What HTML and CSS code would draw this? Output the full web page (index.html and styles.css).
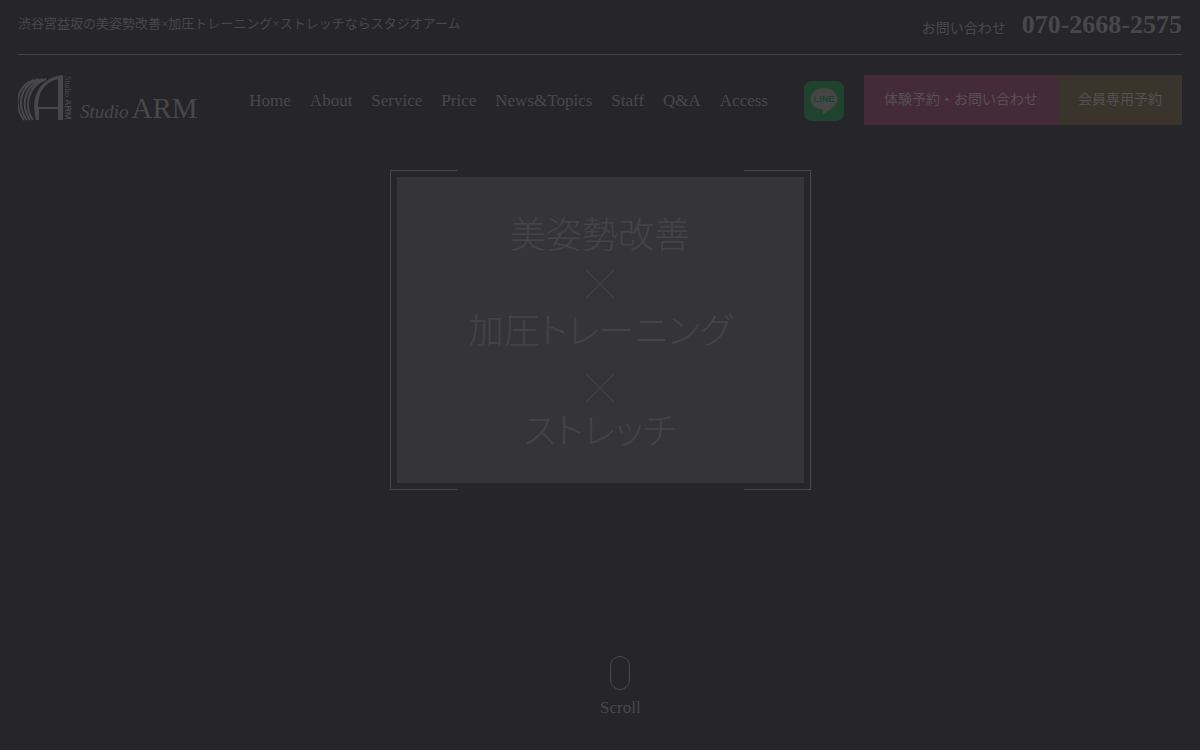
FILE: index.html
```html
<!DOCTYPE html>
<html lang="ja">
<head>
    <meta charset="UTF-8">
    <meta name="viewport" content="width=device-width, initial-scale=1.0">
    <title>Studio ARM</title>
    <link rel="stylesheet" href="styles.css">
</head>
<body>
    <header class="header">
        <div class="header-top">
            <p class="catch">渋谷宮益坂の美姿勢改善×加圧トレーニング×ストレッチならスタジオアーム</p>
            <p class="contact">お問い合わせ <a class="tel" href="tel:07026682575">070-2668-2575</a></p>
        </div>
        <div class="header-main">
            <a class="logo" href="#">
                <svg class="logo-mark" width="54" height="46" viewBox="0 0 54 46" aria-hidden="true">
                    <g fill="none" stroke="currentColor" stroke-width="2">
                        <path d="M16 5C-4 12-3 34 6 45"/>
                        <path d="M21 4C-1 12 0 34 9 45"/>
                        <path d="M25 4C3 12 4 34 12 45"/>
                        <path d="M28 4C7 12 7 34 15 45"/>
                    </g>
                    <path fill="currentColor" fill-rule="evenodd" d="M45 0V45H40V34H21V45H18C12 22 21 3 45 0ZM40 4C27 7 20 17 20 32H40Z"/>
                    <text class="mark-small" transform="translate(47 1) rotate(90)">Studio</text>
                    <text class="mark-name" transform="translate(47 24) rotate(90)">ARM</text>
                </svg>
                <span class="logo-text"><i>Studio</i> <b>ARM</b></span>
            </a>
            <nav class="nav">
                <a href="#">Home</a>
                <a href="#">About</a>
                <a href="#">Service</a>
                <a href="#">Price</a>
                <a href="#">News&amp;Topics</a>
                <a href="#">Staff</a>
                <a href="#">Q&amp;A</a>
                <a href="#">Access</a>
            </nav>
            <a class="line" href="#" aria-label="LINE">
                <svg width="40" height="40" viewBox="0 0 40 40">
                    <rect class="line-bg" width="40" height="40" rx="8"/>
                    <path class="line-balloon" d="M20 7C12.500 7 6.500 12 6.500 18C6.500 23.500 11 27.500 18 28.500C19.500 29 19 30.500 18.700 33C25 30 33.500 24.500 33.500 18C33.500 12 27.500 7 20 7Z"/>
                    <text class="line-name" x="20" y="21" text-anchor="middle">LINE</text>
                </svg>
            </a>
            <div class="buttons">
                <a class="btn btn-trial" href="#">体験予約・お問い合わせ</a>
                <a class="btn btn-member" href="#">会員専用予約</a>
            </div>
        </div>
    </header>
    <main class="hero">
        <div class="frame">
            <h1 class="copy">
                <span>美姿勢改善</span>
                <svg class="cross" viewBox="0 0 30 30" role="img" aria-label="×"><path d="M1 1L29 29M29 1L1 29"/></svg>
                <span>加圧トレーニング</span>
                <svg class="cross cross-low" viewBox="0 0 30 30" role="img" aria-label="×"><path d="M1 1L29 29M29 1L1 29"/></svg>
                <span>ストレッチ</span>
            </h1>
        </div>
    </main>
    <a class="scroll" href="#">
        <span class="mouse"></span>
        Scroll
    </a>
</body>
</html>
```
FILE: styles.css
```css
* {
    margin: 0;
    padding: 0;
    box-sizing: border-box;
}
body {
    display: flex;
    flex-direction: column;
    min-height: 100vh;
    background-color: #26252a;
    color: #48484a;
    font-family: "Liberation Serif", "Noto Sans CJK JP", serif;
}
a {
    color: inherit;
    text-decoration: none;
}
.header {
    padding: 0 18px;
}
.header-top {
    display: flex;
    justify-content: space-between;
    height: 55px;
    border-bottom: 1px solid #444446;
}
.catch {
    padding-top: 14px;
    font-size: 13px;
    line-height: 20px;
}
.contact {
    display: flex;
    align-items: baseline;
    gap: 16px;
    padding-top: 8px;
    font-size: 14px;
    line-height: 34px;
}
.tel {
    font-size: 26px;
    font-weight: bold;
}
.header-main {
    display: flex;
    align-items: center;
    padding-top: 20px;
}
.logo {
    display: flex;
    align-items: flex-end;
    gap: 8px;
    padding-bottom: 4px;
}
.logo-mark {
    display: block;
}
.mark-small {
    font-size: 8px;
    fill: currentColor;
}
.mark-name {
    font-family: "Liberation Sans", sans-serif;
    font-size: 9px;
    font-weight: bold;
    fill: currentColor;
}
.logo-text {
    display: flex;
    align-items: baseline;
    gap: 3px;
    line-height: 18px;
}
.logo-text i {
    font-size: 19px;
}
.logo-text b {
    font-size: 29px;
    font-weight: normal;
}
.nav {
    display: flex;
    gap: 19px;
    margin-left: auto;
    padding-top: 2px;
    font-size: 17px;
    line-height: 24px;
}
.line {
    margin: 2px 20px 0 36px;
}
.line svg {
    display: block;
}
.line-bg {
    fill: #204330;
}
.line-balloon {
    fill: #464647;
}
.line-name {
    font-family: "Liberation Sans", sans-serif;
    font-size: 9px;
    font-weight: bold;
    fill: #204330;
}
.buttons {
    display: flex;
}
.btn {
    padding: 0 20px;
    font-size: 14px;
    line-height: 50px;
    color: #555052;
}
.btn-trial {
    background-color: #452b39;
}
.btn-member {
    background-color: #3a342d;
}
.hero {
    display: flex;
    justify-content: center;
    padding: 45px 18px;
}
/* side lines run the full height, top and bottom lines only at the corners */
.frame {
    width: 100%;
    max-width: 421px;
    padding: 7px 6px;
    border: solid #49494b;
    border-width: 0 1px;
    background:
        linear-gradient(to right, #49494b 66px, transparent 66px, transparent calc(100% - 66px), #49494b calc(100% - 66px)) top / 100% 1px no-repeat,
        linear-gradient(to right, #49494b 66px, transparent 66px, transparent calc(100% - 66px), #49494b calc(100% - 66px)) bottom / 100% 1px no-repeat;
}
.copy {
    display: flex;
    flex-direction: column;
    align-items: center;
    padding: 31px 0;
    background-color: #353537;
    color: #444446;
    font-family: "Noto Sans CJK JP", sans-serif;
    font-size: 36px;
    font-weight: 300;
    font-feature-settings: "palt";
    line-height: 48px;
}
.cross {
    width: 30px;
    height: 30px;
    margin: 13px 0 5px;
    fill: none;
    stroke: #444446;
}
.cross-low {
    margin: 21px 0 1px;
}
.scroll {
    display: flex;
    flex-direction: column;
    align-items: center;
    align-self: flex-start;
    gap: 8px;
    margin: auto 0 32px 50%;
    font-size: 17px;
    line-height: 20px;
}
.mouse {
    width: 20px;
    height: 34px;
    border: 1px solid #49494b;
    border-radius: 10px;
}
```
